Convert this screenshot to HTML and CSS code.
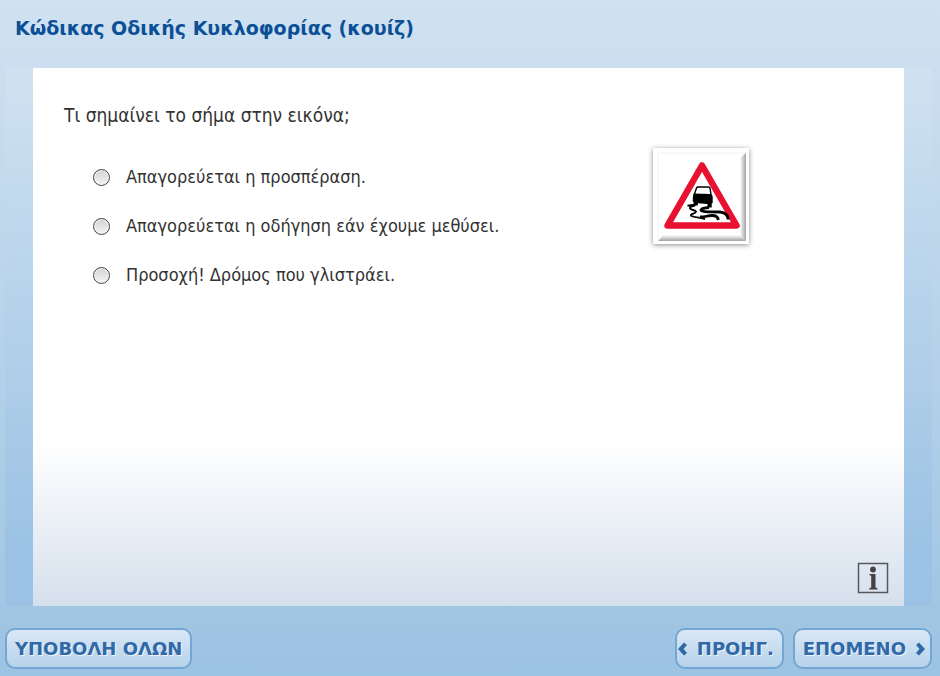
FILE: index.html
```html
<!DOCTYPE html>
<html lang="el">

<head>
    <meta charset="UTF-8">
    <meta name="viewport" content="width=device-width, initial-scale=1.0">
    <title>Κώδικας Οδικής Κυκλοφορίας (κουίζ)</title>
    <link rel="stylesheet" href="styles.css">
</head>

<body>
    <header class="header">
        <h1>Κώδικας Οδικής Κυκλοφορίας (κουίζ)</h1>
    </header>

    <main class="stage">
        <form class="card" id="quiz">
            <fieldset class="question">
                <legend>Τι σημαίνει το σήμα στην εικόνα;</legend>
                <div class="question-body">
                    <div class="answers">
                        <label class="answer"><input type="radio" name="answer" value="1"><span>Απαγορεύεται η προσπέραση.</span></label>
                        <label class="answer"><input type="radio" name="answer" value="2"><span>Απαγορεύεται η οδήγηση εάν έχουμε μεθύσει.</span></label>
                        <label class="answer"><input type="radio" name="answer" value="3"><span>Προσοχή! Δρόμος που γλιστράει.</span></label>
                    </div>
                    <div class="sign">
                        <svg viewBox="0 0 96 96" role="img" aria-label="Οδικό σήμα">
                            <defs>
                                <linearGradient id="edgeRight" x1="0" y1="0" x2="1" y2="0">
                                    <stop offset="0" stop-color="#fff" />
                                    <stop offset="1" stop-color="#a2a2a2" />
                                </linearGradient>
                                <linearGradient id="edgeBottom" x1="0" y1="0" x2="0" y2="1">
                                    <stop offset="0" stop-color="#fff" />
                                    <stop offset="1" stop-color="#a2a2a2" />
                                </linearGradient>
                            </defs>
                            <path d="M5 92V5h87" fill="none" stroke="#f3f3f3" />
                            <path d="M87 10l6-5v88l-6-6z" fill="url(#edgeRight)" />
                            <path d="M10 87h77l6 6H5z" fill="url(#edgeBottom)" />
                            <path d="M49 17.500L83.500 77.500H14.500z" fill="#fff" stroke="#e8112f" stroke-width="6.500" stroke-linejoin="round" />
                            <!-- car -->
                            <path d="M41.500 46l2-6q.4-1 1.500-1h10.500q1.300 0 1.500 1.200l1 6.300" fill="#fff" stroke="#000" stroke-width="1.400" />
                            <path d="M40.500 45.500l18 .5 1.200 2.500V55l-1 .5v4h-4.200v-3.500l-9.500-.8-.3 2.300h-4.200l.2-3-1-1.500.3-5z" />
                            <!-- skid marks -->
                            <path d="M43 56.500l-8.500 1.200M42 57.500c-3 .5-5.500 1.500-5 3 .8 1.500 5.500 1.500 6 3 .3 2-6 2.500-5 4 1.500 2 7.500 1.500 14 3.500" fill="none" stroke="#000" stroke-width="1.900" />
                            <path d="M56 59.500c-4 .3-8.500 1.300-8 2.800 1 2.200 12 1.200 18.500 1.700 6 .5 8.500 3 8.700 7.500" fill="none" stroke="#000" stroke-width="2.800" />
                            <path d="M47 69c5 .3 7.500-1.500 12-1.500 4 0 6 1.500 6.300 4.500" fill="none" stroke="#000" stroke-width="2.800" />
                        </svg>
                    </div>
                </div>
            </fieldset>
            <button type="button" class="info" aria-label="Πληροφορίες">
                <svg viewBox="0 0 32 32" aria-hidden="true">
                    <rect x="1.500" y="1.500" width="29" height="29" fill="none" stroke="#57585b" stroke-width="1.500" />
                    <circle cx="16" cy="7.500" r="2.900" fill="#444" />
                    <path d="M12.500 12h6v13.500l2 .7V27.500h-8.300v-1.300l2-.7V13.800l-1.700-.5z" fill="#444" />
                </svg>
            </button>
        </form>
    </main>

    <footer class="footer">
        <button type="submit" form="quiz" class="btn">ΥΠΟΒΟΛΗ ΟΛΩΝ</button>
        <div class="nav">
            <button type="button" class="btn btn-prev">
                <svg class="arrow" viewBox="0 0 10 14" aria-hidden="true"><path d="M6 .5L0 7l6 6.500L9 11 5.500 7 9 3z" /></svg>
                ΠΡΟΗΓ.
            </button>
            <button type="button" class="btn btn-next">
                ΕΠΟΜΕΝΟ
                <svg class="arrow" viewBox="0 0 10 14" aria-hidden="true"><path d="M4 .5L10 7l-6 6.500L1 11l3.500-4L1 3z" /></svg>
            </button>
        </div>
    </footer>
</body>

</html>
```
FILE: styles.css
```css
* {
    box-sizing: border-box;
}

body {
    margin: 0;
    min-height: 100vh;
    display: flex;
    flex-direction: column;
    font-family: Verdana, 'DejaVu Sans', sans-serif;
    background: linear-gradient(#d0e2f1, #cbdeef 12%, #a1c6e3 90%, #9cc2e4);
}

.header {
    padding: 16px 15px;
}

.header h1 {
    margin: 0 0 12px;
    font-size: 19px;
    line-height: 24px;
    color: #0b5097;
}

.stage {
    flex: 1;
    display: flex;
    margin: 0 8px 0 5px;
    padding: 0 28px;
    background: linear-gradient(#d0e2f1, #9bc2e4 90%);
}

.card {
    flex: 1;
    display: flex;
    flex-direction: column;
    justify-content: space-between;
    padding: 32px 15px 12px 31px;
    background: linear-gradient(#fff 70%, #d5e0ed);
}

.question {
    margin: 0;
    padding: 0;
    border: none;
    font-family: Tahoma, 'DejaVu Sans Condensed', 'DejaVu Sans', sans-serif;
    color: #333;
}

.question legend {
    padding: 0;
    font-size: 19px;
    line-height: 30px;
}

.question-body {
    display: flex;
    justify-content: space-between;
    align-items: flex-start;
    padding: 18px 140px 0 29px;
}

.answers {
    display: flex;
    flex-direction: column;
    gap: 21px;
    padding-top: 15px;
}

.answer {
    display: flex;
    align-items: center;
    gap: 16px;
    font-size: 18px;
    line-height: 28px;
    cursor: pointer;
}

.answer input {
    appearance: none;
    width: 17px;
    height: 17px;
    margin: 0;
    border: 1px solid #444;
    border-radius: 50%;
    background: linear-gradient(#d2d2d2, #f4f4f4);
    box-shadow: inset 0 0 0 1px #f3f3f3;
}

.answer input:checked {
    background: radial-gradient(#333 35%, #eee 40%);
}

.sign {
    width: 96px;
    height: 96px;
    background-color: #fff;
    box-shadow: 0 1px 5px rgba(0, 0, 0, 0.45);
}

.sign svg {
    display: block;
}

.info {
    align-self: flex-end;
    width: 32px;
    height: 32px;
    padding: 0;
    border: none;
    background: none;
    cursor: pointer;
}

.info svg {
    display: block;
}

.footer {
    display: flex;
    justify-content: space-between;
    padding: 22px 8px 7px 5px;
}

.nav {
    display: flex;
    gap: 9px;
}

.btn {
    display: flex;
    align-items: center;
    height: 41px;
    padding: 0 8px;
    border: 2px solid #73a6d3;
    border-radius: 10px;
    background: linear-gradient(#dae8f5, #b5d2ea);
    font-family: inherit;
    font-size: 18px;
    font-weight: bold;
    color: #3068a8;
    text-shadow: 1px 1px 0 #eef5fb;
    cursor: pointer;
}

.btn:hover {
    background: linear-gradient(#e6f0f9, #c4dcf0);
}

.btn-prev {
    gap: 9px;
    padding-left: 1px;
}

.btn-next {
    gap: 9px;
    padding-right: 5px;
}

.arrow {
    width: 10px;
    height: 14px;
    fill: #3068a8;
}
```
